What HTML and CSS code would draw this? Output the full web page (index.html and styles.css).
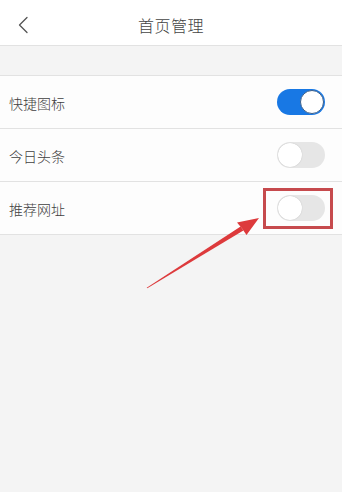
FILE: index.html
```html
<!DOCTYPE html>
<html lang="zh">
<head>
<meta charset="utf-8">
<title>首页管理</title>
<link rel="stylesheet" href="styles.css">
</head>
<body>
<div class="page">
  <header class="topbar">
    <svg class="back" width="12" height="18" viewBox="0 0 12 18"><polyline points="10,1.5 2.5,9 10,16.5" fill="none" stroke="#555" stroke-width="1.3" stroke-linecap="round" stroke-linejoin="round"/></svg>
    <div class="title">首页管理</div>
  </header>
  <section class="list">
    <div class="row"><span class="label">快捷图标</span><span class="toggle on"><span class="knob"></span></span></div>
    <div class="row"><span class="label">今日头条</span><span class="toggle"><span class="knob"></span></span></div>
    <div class="row"><span class="label">推荐网址</span><span class="toggle"><span class="knob"></span></span></div>
  </section>
  <div class="highlight"></div>
  <svg class="arrow" width="342" height="492" viewBox="0 0 342 492">
    <polygon points="146.7,287.8 147.3,288.2 243.4,230.6 240.6,226.6" fill="#dd3a3c"/>
    <polygon points="259,218 246.5,235 242,228.6 237,222.5" fill="#dd3a3c"/>
  </svg>
</div>
</body>
</html>
```
FILE: styles.css
```css
html, body {
  margin: 0;
  padding: 0;
  background: #f4f4f4;
}
.page {
  position: relative;
  width: 342px;
  height: 492px;
  font-family: "Noto Sans CJK SC", "Noto Sans", sans-serif;
  background: #f4f4f4;
  overflow: hidden;
}
.topbar {
  position: relative;
  height: 46px;
  background: #fff;
  border-bottom: 1px solid #e2e2e2;
  display: flex;
  align-items: center;
  justify-content: center;
  padding-top: 4px;
  box-sizing: border-box;
}
.back {
  position: absolute;
  left: 17px;
  top: 16px;
}
.title {
  font-size: 16px;
  font-weight: 300;
  color: #444;
  letter-spacing: 0.5px;
}
.list {
  margin-top: 29px;
  background: #fdfdfd;
  border-top: 1px solid #e2e2e2;
}
.row {
  height: 52px;
  border-bottom: 1px solid #e2e2e2;
  display: flex;
  align-items: center;
  justify-content: space-between;
  padding: 0 17px 0 9px;
}
.label {
  font-size: 14px;
  font-weight: 300;
  color: #404040;
  padding-top: 2px;
}
.toggle {
  position: relative;
  width: 48px;
  height: 26px;
  border-radius: 13px;
  background: #e6e6e6;
  box-sizing: border-box;
}
.toggle .knob {
  position: absolute;
  left: 1px;
  top: 1px;
  width: 24px;
  height: 24px;
  border-radius: 50%;
  background: #fff;
  box-shadow: 0 0 1px rgba(0,0,0,0.25);
}
.toggle.on {
  background: #1878e4;
}
.toggle.on .knob {
  left: auto;
  right: 1px;
  box-sizing: border-box;
  border: 1px solid #3b5f8a;
  box-shadow: none;
}
.highlight {
  position: absolute;
  left: 263px;
  top: 188px;
  width: 70px;
  height: 41px;
  box-sizing: border-box;
  border: 3px solid #c64a4d;
}
.arrow {
  position: absolute;
  left: 0;
  top: 0;
  pointer-events: none;
}
```
